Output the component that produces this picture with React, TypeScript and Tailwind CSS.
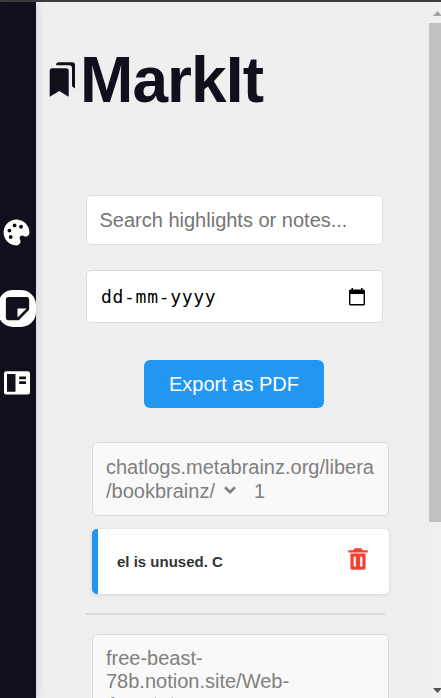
import { BiSolidNote, BiSolidPalette, BiSolidTrash } from "react-icons/bi";

function Sidebar() {
  return (
    <nav className="z-10 flex w-9 shrink-0 flex-col bg-[#10101c] pt-[215px] text-white shadow-[2px_0_8px_rgba(0,0,0,0.1)]">
      <BiSolidPalette className="ml-[1px] block h-[31px] w-[31px]" />
      <div className="-ml-[2px] mt-[42px] flex h-[37px] w-[38px] items-center justify-center rounded-[15px] bg-white text-[#10101c]">
        <BiSolidNote className="h-[31px] w-[31px]" />
      </div>
      <svg className="ml-1 mt-[44px] block h-[24px] w-[26px]" viewBox="0 0 26 24" fill="none">
        <rect y=".3" width="26" height="23.2" rx="2.2" fill="white" />
        <path d="M3 3H11.5V20.7H3ZM15.2 5.6H22V8.2H15.2ZM15.2 10.3H22V12.9H15.2Z" fill="#10101c" />
      </svg>
    </nav>
  );
}

function Header() {
  return (
    <header className="flex h-[78px] shrink-0 items-start pl-[13px]">
      <svg className="mt-[20px] h-[36px] w-[27px] shrink-0" viewBox="0 0 27 36" fill="#10101c">
        <path d="M.7 8.5Q.7 6.3 3 6.3H17.2Q19.7 6.3 19.7 8.5V34.8L10.3 29L.7 34.8Z" />
        <path d="M7.1 3Q7.1 .3 9.8 .3H23.2Q26 .3 26 3.1V26.5L23 24.3V6Q23 3.2 20.2 3.2H7.1Z" />
      </svg>
      <h1 className="ml-[4px] text-[64px] leading-[76px] font-bold tracking-[-0.9px] text-[#10101c]">MarkIt</h1>
    </header>
  );
}

function CalendarIcon() {
  return (
    <svg className="h-[18px] w-4" viewBox="0 0 16 18">
      <path fillRule="evenodd" d="M2.5 0H4V1.5H12V0H13.5V1.5H14.5Q16 1.5 16 3V16Q16 17.5 14.5 17.5H1.5Q0 17.5 0 16V3Q0 1.5 1.5 1.5H2.5ZM1.4 6V16H14.6V6Z" />
    </svg>
  );
}

function Chevron() {
  return (
    <svg className="ml-[9px] mr-[18px] inline-block h-[8px] w-[12px] align-[4px]" viewBox="0 0 12 8" fill="none">
      <path d="M1 1.2L6 6.1L11 1.2" stroke="#808080" strokeWidth="2.6" />
    </svg>
  );
}

function Scrollbar() {
  return (
    <div className="flex w-3 shrink-0 flex-col bg-[#f0f0f0]">
      <svg className="ml-[4px] mt-[9px] h-[5px] w-[9px] shrink-0" viewBox="0 0 9 5" fill="#a3a3a3"><path d="M0 5L4.5 0L9 5Z" /></svg>
      <div className="mt-[7px] h-[499px] shrink-0 bg-[#c1c1c1]" />
      <svg className="ml-[4px] mt-[166px] h-[5px] w-[9px] shrink-0" viewBox="0 0 9 5" fill="#505050"><path d="M0 0H9L4.5 5Z" /></svg>
    </div>
  );
}

export default function App() {
  return (
    <div className="flex h-[698px] w-[441px] flex-col overflow-hidden bg-[#efefef] font-['Liberation_Sans',Arial,sans-serif]">
      <div className="h-[2px] shrink-0 bg-[#3d3d3d]" />
      <div className="flex min-h-0 flex-1">
        <Sidebar />
        <main className="flex min-w-0 flex-1 flex-col overflow-hidden pt-[40px]">
          <Header />
          <div className="ml-[50px] mt-[75px] flex w-[297px] shrink-0 flex-col">
            <div className="flex h-[50px] items-center rounded-[5px] border border-[#dcdcdc] bg-white pl-[12.5px] text-[20px] text-[#757575]">
              Search highlights or notes...
            </div>
            <div className="mt-[25px] flex h-[53px] items-center justify-between rounded-[5px] border border-[#dcdcdc] bg-white pl-[14px] pr-[17px]">
              <span className="font-['DejaVu_Sans_Mono',monospace] text-[18px] tracking-[0.7px] text-black">dd-mm-yyyy</span>
              <CalendarIcon />
            </div>
            <button className="ml-[58px] mt-[37px] h-[48px] w-[180px] rounded-[6px] bg-[#2196f3] text-[20px] text-white">Export as PDF</button>
          </div>
          <div className="ml-[56px] mt-[34px] flex w-[297px] shrink-0 flex-col">
            <div className="h-[74px] rounded-[5px] border border-[#dcdcdc] bg-[#f9f9f9] pl-[13px] pt-[12px] text-[20px] leading-[24px] text-[#808080]">
              <div>chatlogs.metabrainz.org/libera</div>
              <div>/bookbrainz/<Chevron />1</div>
            </div>
            <div className="mt-[13px] flex h-[65px] items-center justify-between rounded-[5px] border-l-[6px] border-[#2196f3] bg-white pl-[19px] pr-[18px] shadow-[0_1px_4px_rgba(0,0,0,0.12)]">
              <span className="pt-[2px] text-[15px] font-bold text-[#333]">el is unused. C</span>
              <BiSolidTrash className="-mt-[5px] h-[26px] w-[26px] text-[#f44336]" />
            </div>
          </div>
          <hr className="ml-[50px] mt-[19px] w-[299px] shrink-0 border-t-2 border-[#d9d9d9]" />
          <div className="ml-[56px] mt-[19px] h-[100px] w-[297px] shrink-0 rounded-[5px] border border-[#dcdcdc] bg-[#f9f9f9] pl-[13px] pt-[12px] text-[20px] leading-[23px] text-[#808080]">
            <div>free-beast-</div>
            <div>78b.notion.site/Web-</div>
            <div>Annotator</div>
          </div>
        </main>
        <Scrollbar />
      </div>
    </div>
  );
}
